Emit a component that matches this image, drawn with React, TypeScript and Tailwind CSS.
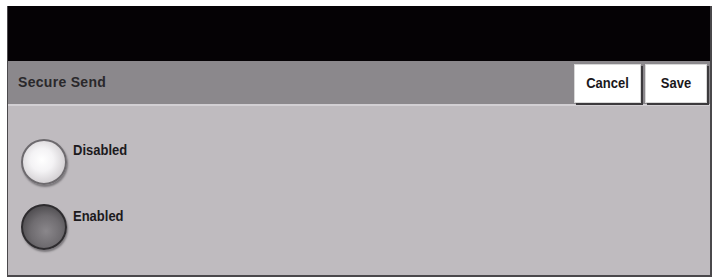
export default function App() {
  const font = { fontFamily: '"Liberation Sans", Arial, sans-serif' };
  return (
    <div className="w-[715px] h-[279px] bg-white pl-[7px] pt-[6px]" style={font}>
      <div className="w-[705px] h-[271px] flex flex-col bg-[#bfbbbf] border-b-2 border-r-2 border-l border-[#4a484b]">
        <div className="h-[55px] bg-[#050205]" />
        <div className="h-[45px] bg-[#8b888c] border-b-2 border-[#d2cfd3] flex items-center justify-between pl-[10px] pr-[3px]">
          <span className="text-[14px] font-bold text-[#2a282b] tracking-[0.3px] scale-y-110">Secure Send</span>
          <div className="flex gap-[4px] self-end pb-[1px]">
            <button className="w-[67px] h-[39px] bg-white border border-[#d8d8d8] shadow-[2px_2px_0_#3c3a3d] text-[13px] font-bold text-[#1a181b] scale-y-100">
              <span className="inline-block scale-y-110">Cancel</span>
            </button>
            <button className="w-[62px] h-[39px] bg-white border border-[#d8d8d8] shadow-[2px_2px_0_#3c3a3d] text-[13px] font-bold text-[#1a181b]">
              <span className="inline-block scale-y-110">Save</span>
            </button>
          </div>
        </div>
        <div className="flex flex-col gap-[19px] pl-[13px] pt-[33px]">
          <div className="flex items-start gap-[6px]">
            <div className="w-[46px] h-[46px] rounded-full border-2 border-[#6d6a6e] bg-[radial-gradient(circle_at_45%_45%,#ffffff_0%,#f4f3f5_35%,#d6d3d6_70%,#8f8c90_100%)] shadow-[1px_2px_2px_#7a777b]" />
            <span className="text-[13px] font-bold text-[#1c1a1d] mt-[2px] inline-block scale-y-110">Disabled</span>
          </div>
          <div className="flex items-start gap-[6px]">
            <div className="w-[46px] h-[46px] rounded-full border-2 border-[#2e2c2f] bg-[radial-gradient(circle_at_55%_60%,#8a878b_0%,#6f6c70_45%,#4b494c_80%,#2e2c2f_100%)] shadow-[1px_2px_2px_#7a777b]" />
            <span className="text-[13px] font-bold text-[#1c1a1d] mt-[3px] inline-block scale-y-110">Enabled</span>
          </div>
        </div>
      </div>
    </div>
  );
}
